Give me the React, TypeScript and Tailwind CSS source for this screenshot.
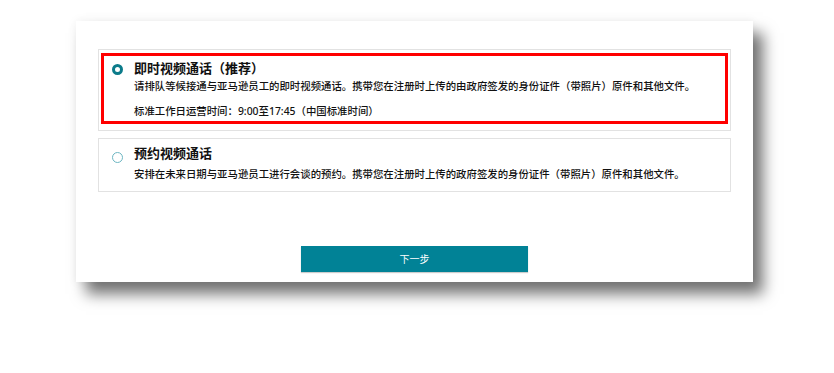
import React from "react";

const font = {
  fontFamily: '"Noto Sans", "Noto Sans CJK SC", sans-serif',
};

function Radio({ checked }: { checked: boolean }) {
  return checked ? (
    <span className="block size-[11px] rounded-full border-[3.5px] border-[#0b7b8a] bg-white" />
  ) : (
    <span className="block size-[11px] rounded-full border-[1.5px] border-[#6cb6c2] bg-white" />
  );
}

export default function App() {
  return (
    <div className="h-[373px] w-[834px] bg-white" style={font}>
      <div className="pl-[76px] pt-[21px]">
        <div className="flex h-[261px] w-[677px] flex-col bg-white px-[22px] pt-[28px] shadow-[10px_12px_14px_rgba(0,0,0,0.55),0_0_10px_rgba(0,0,0,0.06)]">
          {/* option 1 */}
          <div className="relative border border-[#e2e2e2] pb-[11px] pt-[10px] text-[#111]">
            <div className="absolute bottom-[6px] left-[2px] right-[2px] top-[3px] border-[3px] border-[#ff0000]" />
            <div className="flex">
              <div className="flex w-[35px] shrink-0 justify-center pl-[1px] pt-[4px]">
                <Radio checked />
              </div>
              <div className="flex flex-col">
                <div className="text-[13px] font-bold leading-[16px] text-[#111]">
                  即时视频通话（推荐）
                </div>
                <div className="mt-[2px] whitespace-nowrap text-[10.4px] font-medium leading-[16px]">
                  请排队等候接通与亚马逊员工的即时视频通话。携带您在注册时上传的由政府签发的身份证件（带照片）原件和其他文件。
                </div>
                <div className="mt-[9px] whitespace-nowrap text-[10.4px] font-medium leading-[16px]">
                  标准工作日运营时间：9:00至17:45（中国标准时间）
                </div>
              </div>
            </div>
          </div>

          {/* option 2 */}
          <div className="mt-[7px] border border-[#e2e2e2] pb-[9px] pt-[6px] text-[#111]">
            <div className="flex">
              <div className="flex w-[35px] shrink-0 justify-center pl-[1px] pt-[7px]">
                <Radio checked={false} />
              </div>
              <div className="flex flex-col">
                <div className="text-[13px] font-bold leading-[16px] text-[#111]">
                  预约视频通话
                </div>
                <div className="mt-[5px] whitespace-nowrap text-[10.4px] font-medium leading-[16px]">
                  安排在未来日期与亚马逊员工进行会谈的预约。携带您在注册时上传的政府签发的身份证件（带照片）原件和其他文件。
                </div>
              </div>
            </div>
          </div>

          <div className="mt-[54px] flex justify-center">
            <button className="h-[26px] w-[227px] bg-[#018296] text-[10px] text-white shadow-[0_1px_1px_rgba(0,0,0,0.2)]">
              下一步
            </button>
          </div>
        </div>
      </div>
    </div>
  );
}
